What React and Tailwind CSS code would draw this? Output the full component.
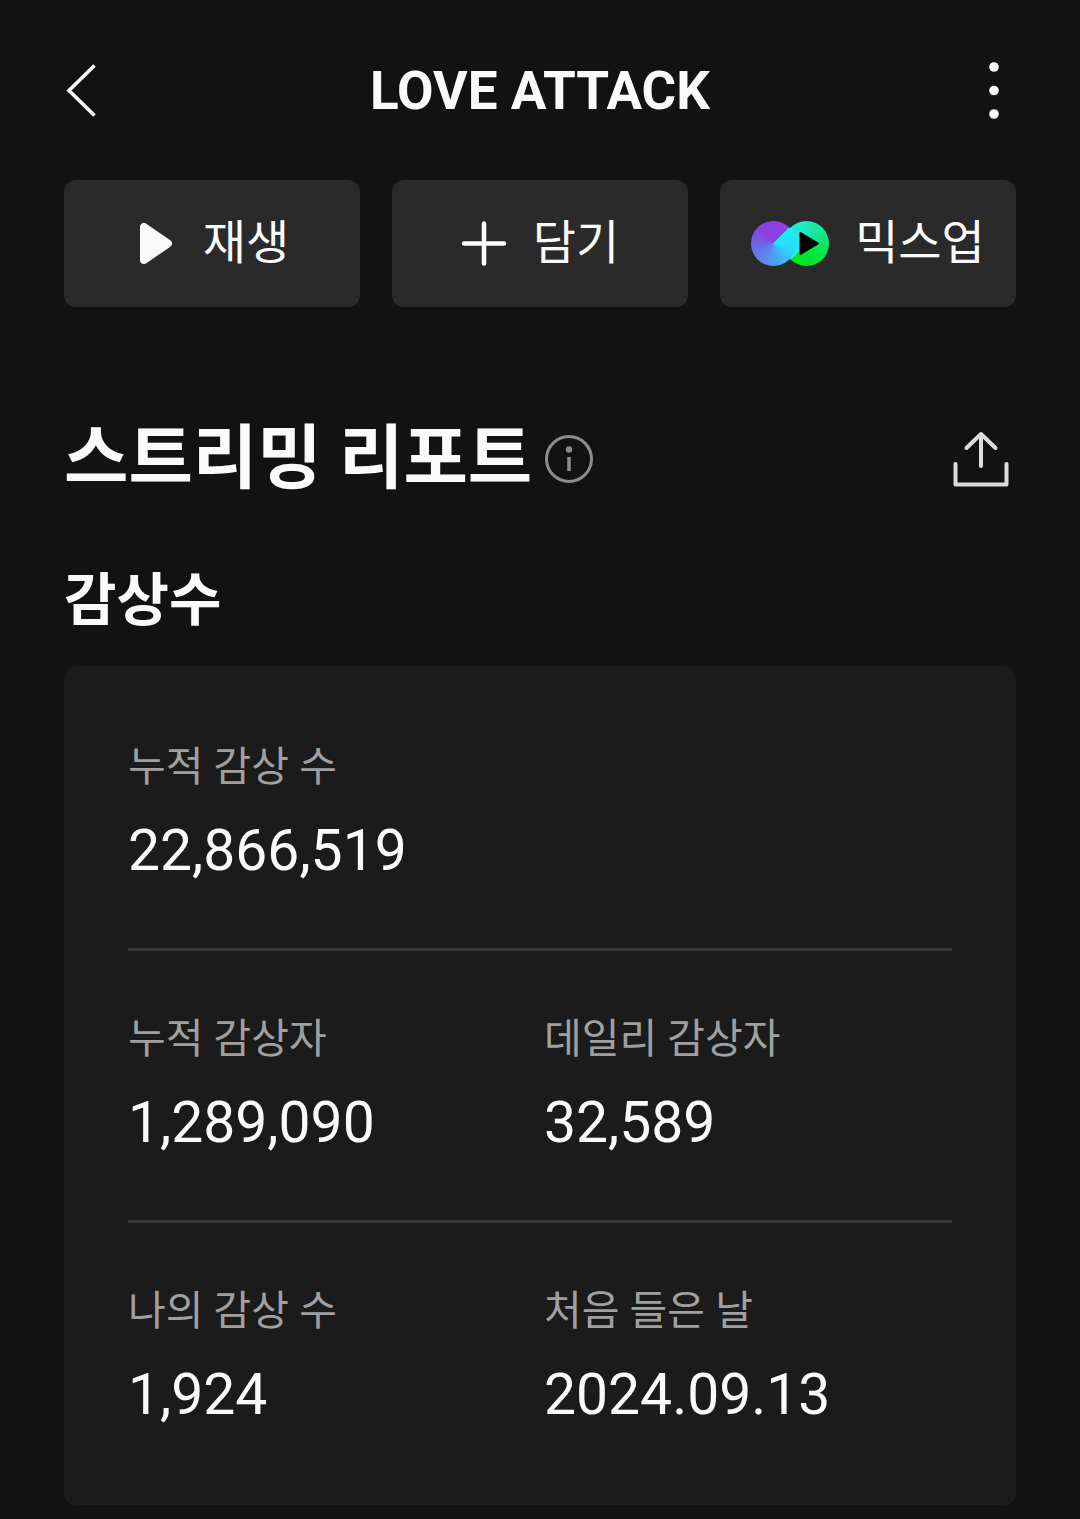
function BackIcon() {
  return (
    <svg width="34" height="56" viewBox="0 0 34 56" fill="none" stroke="#fafafa" strokeWidth="3.600">
      <path d="M30.500 3.500 5 28.500 30.500 53.500" />
    </svg>
  )
}

function MoreIcon() {
  return (
    <svg width="12" height="60" viewBox="0 0 12 60" fill="#fafafa">
      <circle cx="6" cy="7" r="4.800" />
      <circle cx="6" cy="30.500" r="4.800" />
      <circle cx="6" cy="54" r="4.800" />
    </svg>
  )
}

function PlayIcon() {
  return (
    <svg width="42" height="46" viewBox="0 0 42 46" fill="#fafafa" stroke="#fafafa" strokeWidth="8" strokeLinejoin="round">
      <path d="M9 6v33L33 22.500z" />
    </svg>
  )
}

function PlusIcon() {
  return (
    <svg width="46" height="46" viewBox="0 0 46 46" stroke="#fafafa" strokeWidth="4.500" strokeLinecap="round">
      <path d="M23 2.500v40M3 22.500h40" />
    </svg>
  )
}

function MixIcon() {
  return (
    <span className="relative flex">
      <span className="size-[45px] rounded-full bg-[conic-gradient(from_45deg,#22e8ff,#28dcff_60deg,#42b0f8_110deg,#5a90f0_150deg,#6a70e8_210deg,#8a40e0_270deg,#9040e0_360deg)] z-10" />
      <span className="size-[45px] -ml-3 rounded-full bg-[conic-gradient(from_225deg,#22e8ff,#22e8f8_60deg,#20e8c0_130deg,#10e880_200deg,#06e640_270deg,#00e628_310deg,#00e628_360deg)]" />
      <svg className="absolute inset-0 z-20" width="78" height="45" viewBox="0 0 78 45" stroke="#000" strokeWidth="2" strokeLinejoin="round">
        <path d="M49.500 12v21L67 22.500z" />
      </svg>
    </span>
  )
}

function InfoIcon() {
  return (
    <svg width="50" height="50" viewBox="0 0 50 50" fill="none" stroke="#8c8c8c" strokeWidth="3">
      <circle cx="25" cy="25" r="22.500" />
      <path d="M25 23v14" strokeWidth="3.500" />
      <circle cx="25" cy="15.500" r="3.200" fill="#8c8c8c" stroke="none" />
    </svg>
  )
}

function ShareIcon() {
  return (
    <svg width="58" height="58" viewBox="0 0 58 58" fill="none" stroke="#dcdcdc" strokeWidth="4" strokeLinecap="round" strokeLinejoin="round">
      <path d="M3.500 34v20.500h51V34M29 36V4M14.500 18 29 4l14.500 14" />
    </svg>
  )
}

function ActionButton({ icon, label }) {
  return (
    <button className="flex-1 h-[127px] flex items-center justify-center gap-[26px] rounded-xl bg-[#2a2a2a] text-[47px] leading-[64px]">
      {icon}
      <span className="pb-0.5">{label}</span>
    </button>
  )
}

function Stat({ label, value }) {
  return (
    <div>
      <dt className="text-[41px] leading-[56px] text-[#a0a0a0]">{label}</dt>
      <dd className="mt-6 text-[57px] leading-[64px]">{value}</dd>
    </div>
  )
}

const rows = [
  [{ label: '누적 감상 수', value: '22,866,519' }],
  [
    { label: '누적 감상자', value: '1,289,090' },
    { label: '데일리 감상자', value: '32,589' },
  ],
  [
    { label: '나의 감상 수', value: '1,924' },
    { label: '처음 들은 날', value: '2024.09.13' },
  ],
]

function App() {
  return (
    <div className="min-h-screen bg-[#121212] px-16 pb-3 text-[#fafafa] font-['Roboto','Noto_Sans_CJK_KR',sans-serif]">
      <header className="h-[180px] flex items-center justify-between">
        <button aria-label="뒤로" className="w-12">
          <BackIcon />
        </button>
        <h1 className="pt-0.5 text-[53px] leading-[64px] font-bold">LOVE ATTACK</h1>
        <button aria-label="더보기" className="w-12 pr-4 flex justify-end">
          <MoreIcon />
        </button>
      </header>

      <div className="flex gap-8">
        <ActionButton icon={<PlayIcon />} label="재생" />
        <ActionButton icon={<PlusIcon />} label="담기" />
        <ActionButton icon={<MixIcon />} label="믹스업" />
      </div>

      <div className="mt-[112px] flex items-center justify-between">
        <div className="flex items-center gap-3">
          <h2 className="text-[70px] leading-[80px] font-bold">스트리밍 리포트</h2>
          <button aria-label="안내">
            <InfoIcon />
          </button>
        </div>
        <button aria-label="공유" className="pr-1.5">
          <ShareIcon />
        </button>
      </div>

      <h3 className="mt-[70px] text-[57px] leading-[64px] font-bold">감상수</h3>

      <div className="mt-[33px] px-16 py-[13px] rounded-xl bg-[#1b1b1b] divide-y-3 divide-[#373737]">
        {rows.map((row, i) => (
          <dl key={i} className="grid grid-cols-2 gap-2 pt-[60px] pb-[65px]">
            {row.map((item) => (
              <Stat key={item.label} label={item.label} value={item.value} />
            ))}
          </dl>
        ))}
      </div>
    </div>
  )
}

export default App
